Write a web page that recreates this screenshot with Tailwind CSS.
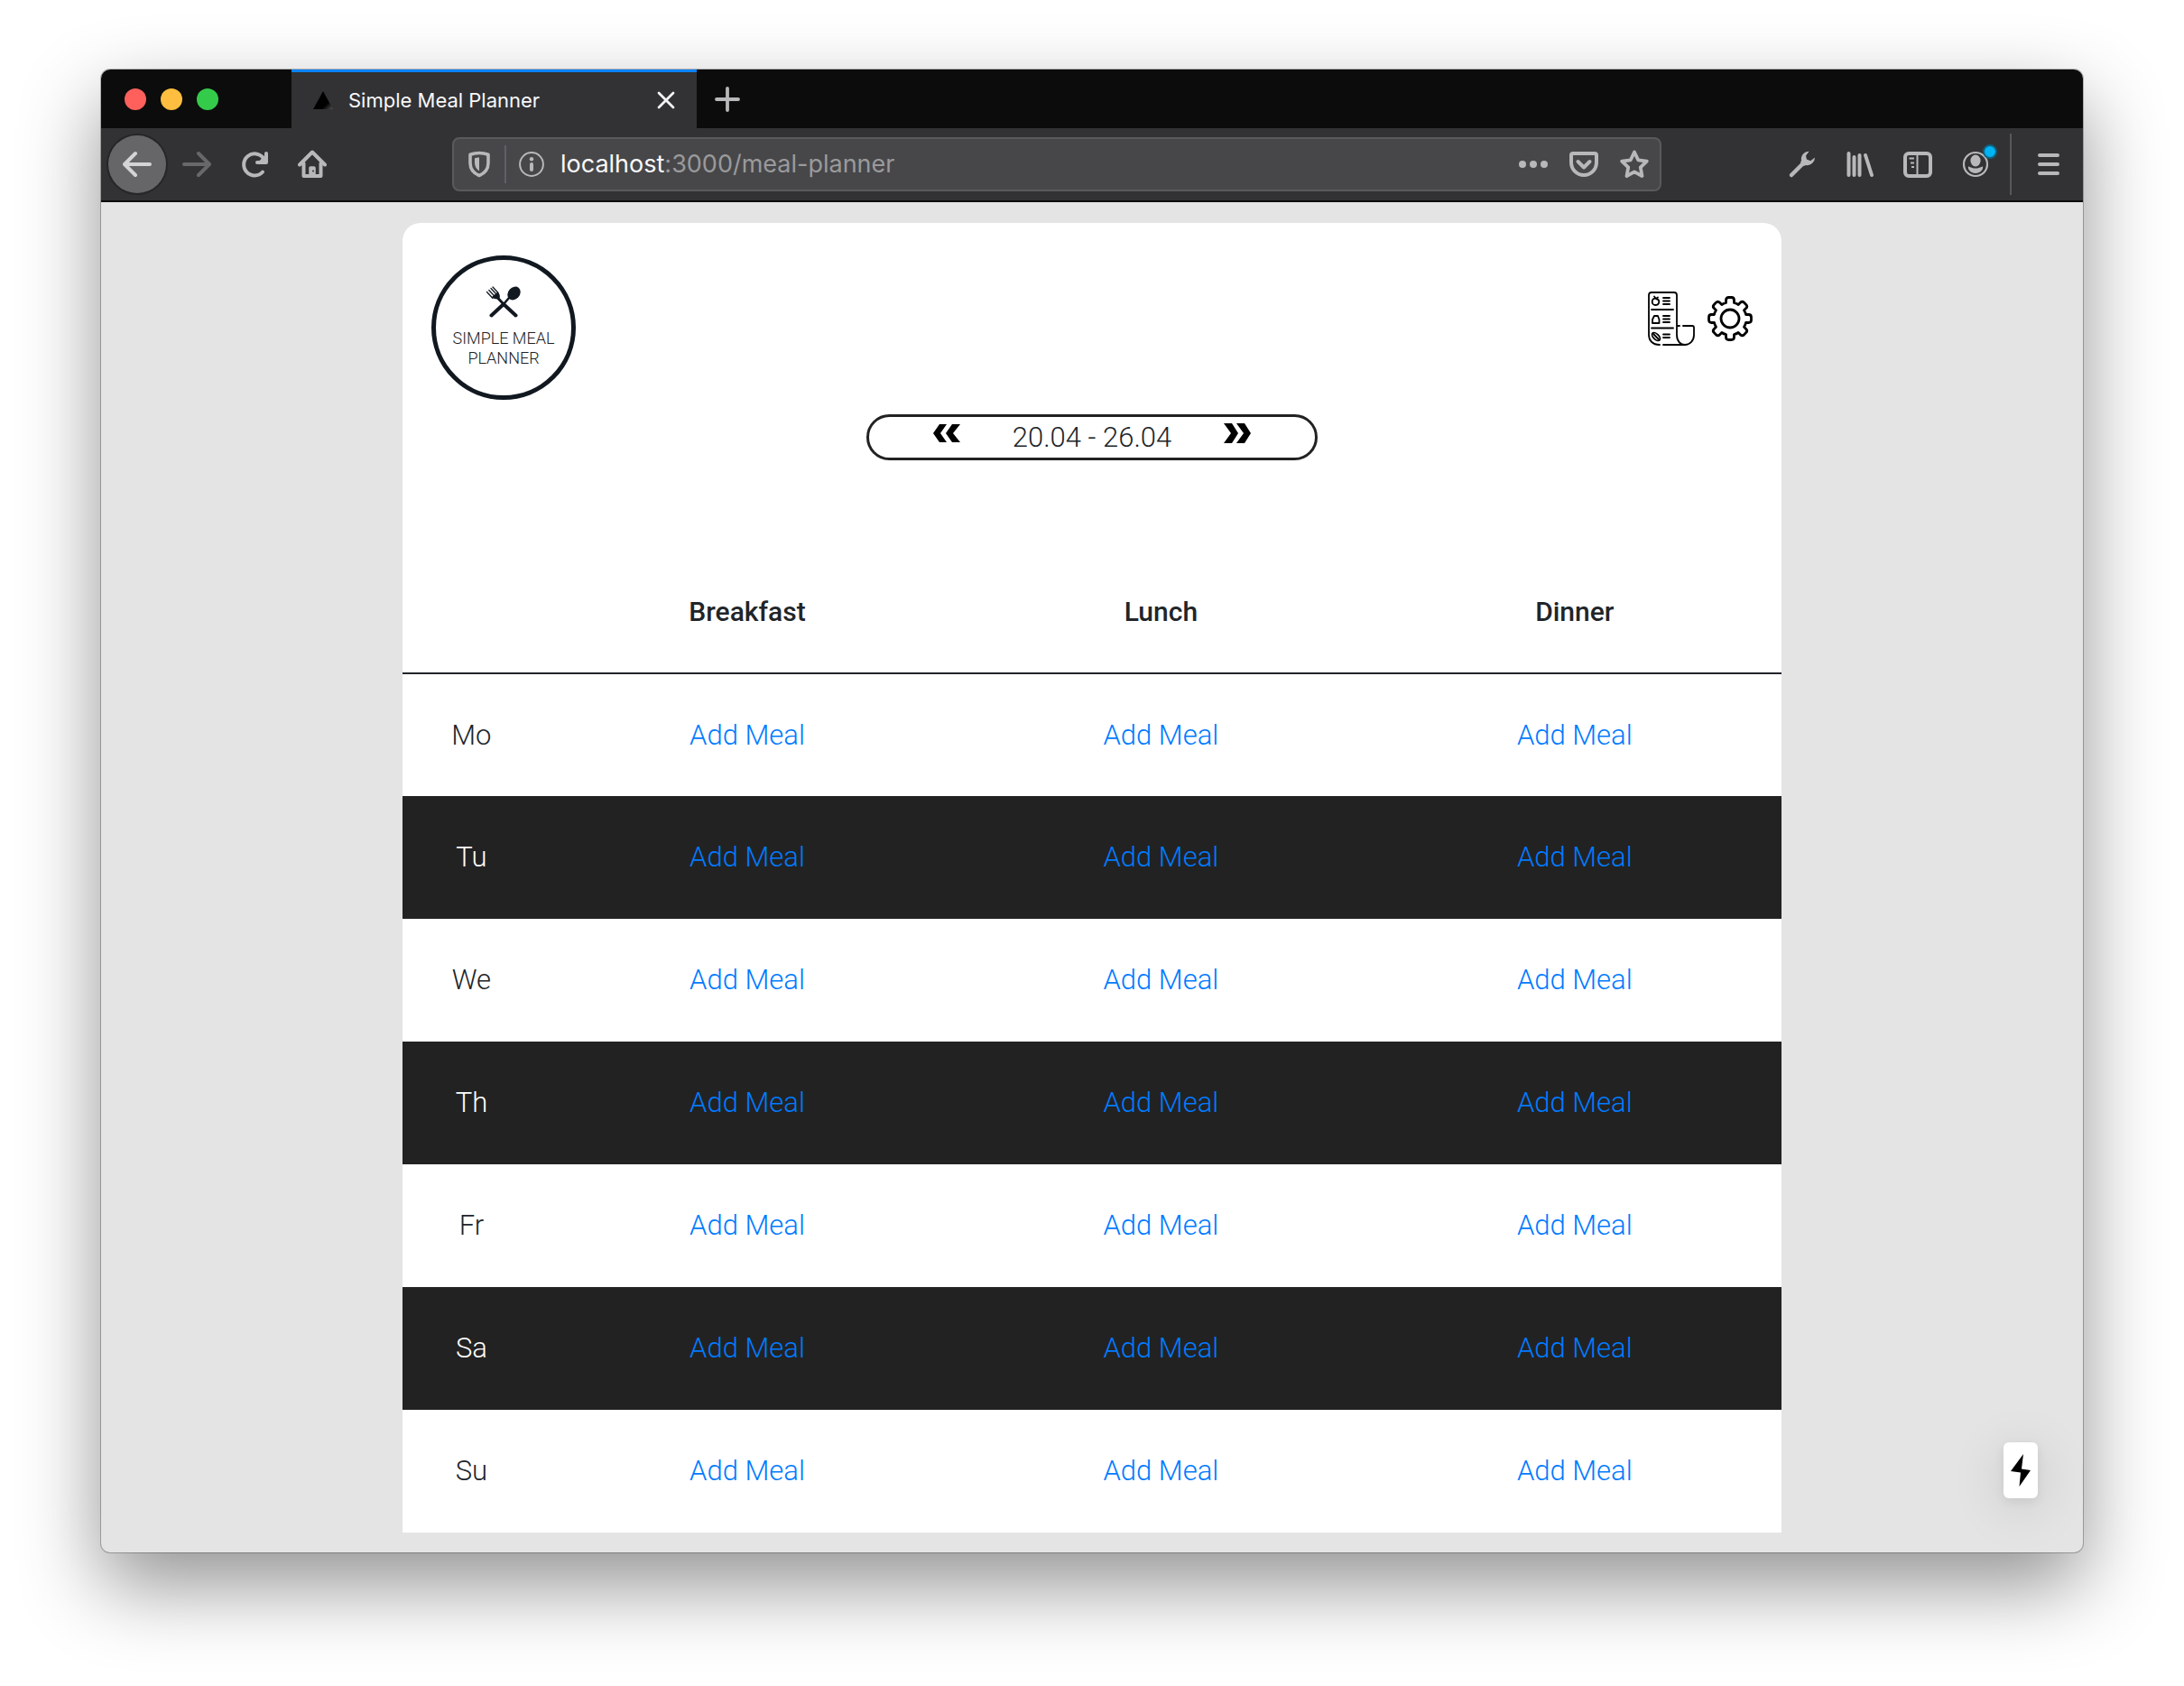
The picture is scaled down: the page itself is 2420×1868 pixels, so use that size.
<!DOCTYPE html>
<html lang="en">
<head>
<meta charset="utf-8">
<title>Simple Meal Planner</title>
<script src="https://cdn.jsdelivr.net/npm/@tailwindcss/browser@4"></script>
</head>
<body class="bg-white font-['Roboto',sans-serif] text-[#212529]">
<div class="min-h-screen px-28 pt-[77px] pb-[148px] overflow-hidden">
  <div class="relative rounded-[10px] bg-[#e4e4e4] shadow-[0_0_0_1px_rgba(0,0,0,0.25),0_36px_88px_0_rgba(0,0,0,0.43)]">

    <header class="rounded-t-[10px] overflow-hidden text-[#b8b8ba]">
      <div class="flex h-[65px] items-stretch bg-[#0c0c0c]">
        <div class="flex w-[211px] items-center gap-4 pl-[26px]">
          <button aria-label="Close window" class="size-6 rounded-full bg-[#ff605c]"></button>
          <button aria-label="Minimise window" class="size-6 rounded-full bg-[#ffbe3f]"></button>
          <button aria-label="Zoom window" class="size-6 rounded-full bg-[#34cb4b]"></button>
        </div>
        <div class="flex w-[449px] items-center border-t-3 border-[#0a84ff] bg-[#323234] pl-6 pr-[22px]">
          <svg class="h-5 w-[22px]" viewBox="0 0 22 20"><defs><linearGradient id="tri" x1="0.5" y1="0.5" x2="1" y2="1"><stop offset="0.4" stop-color="#000"/><stop offset="1" stop-color="#555"/></linearGradient></defs><path d="M11 0l11 20H0z" fill="url(#tri)"/></svg>
          <span class="ml-[17px] text-[22px] leading-7 text-[#f9f9fa] font-['Inter',sans-serif]">Simple Meal Planner</span>
          <button aria-label="Close tab" class="ml-auto text-[#f4f4f6]"><svg class="size-6" viewBox="0 0 24 24" fill="none" stroke="currentColor" stroke-width="2.8" stroke-linecap="round"><path d="M4 4l16 16M20 4L4 20"/></svg></button>
        </div>
        <button aria-label="New tab" class="ml-5"><svg class="size-7" viewBox="0 0 28 28" fill="none" stroke="currentColor" stroke-width="3.8" stroke-linecap="round"><path d="M14 2v24M2 14h24"/></svg></button>
      </div>

      <div class="flex h-[82px] items-center border-b-2 border-[#0c0c0c] bg-[#323234]">
        <button aria-label="Back" class="ml-2 grid size-16 place-items-center rounded-full bg-[#666668] text-[#d4d4d6] ring-2 ring-[#262628]"><svg class="size-8" viewBox="0 0 32 32" fill="none" stroke="currentColor" stroke-width="4" stroke-linecap="round" stroke-linejoin="round"><path d="M30 16H3M14 4L2 16l12 12"/></svg></button>
        <button aria-label="Forward" class="ml-[18px] text-[#68686a]"><svg class="size-8" viewBox="0 0 32 32" fill="none" stroke="currentColor" stroke-width="4" stroke-linecap="round" stroke-linejoin="round"><path d="M2 16h27M18 4l12 12-12 12"/></svg></button>
        <button aria-label="Reload" class="ml-8"><svg class="size-8" viewBox="0 0 32 32" fill="none" stroke="currentColor" stroke-width="4" stroke-linecap="round" stroke-linejoin="round"><path d="M25 24.500A12 12 0 1 1 26 9.500"/><path d="M29 4v10H19"/><path d="M29 6v8h-8z" fill="currentColor" stroke-width="2"/></svg></button>
        <button aria-label="Home" class="ml-8"><svg class="size-8" viewBox="0 0 32 32" fill="none" stroke="currentColor" stroke-width="4" stroke-linecap="round" stroke-linejoin="round"><path d="M2 16.500L16 2.500l14 14M6.500 15v14h19V15"/><path d="M13 29V20a1 1 0 0 1 1-1h4a1 1 0 0 1 1 1v9z" fill="currentColor" stroke-width="1.500"/><circle cx="17" cy="23.500" r="1" fill="#323234" stroke="none"/></svg></button>

        <div class="ml-[139px] flex h-[60px] min-w-0 flex-1 items-center rounded-lg border-2 border-[#5a5a5c] bg-[#474749] pl-[15px] pr-3">
          <svg class="h-[30px] w-[26px] shrink-0" viewBox="0 0 26 30"><path d="M13 2.500c4 0 7 .6 10 1.700v9.300c0 6.500-4 11.500-10 14-6-2.500-10-7.500-10-14V4.200c3-1.100 6-1.700 10-1.700z" fill="none" stroke="currentColor" stroke-width="3.600" stroke-linejoin="round"/><path d="M13 7.500v15c-3-2-5-5-5-9V8.200c1.500-.4 3-.7 5-.7z" fill="currentColor"/></svg>
          <span class="ml-[15px] h-[42px] w-0.5 shrink-0 bg-[#5d6068]"></span>
          <svg class="ml-[14px] size-7 shrink-0" viewBox="0 0 28 28"><circle cx="14" cy="14" r="12.900" fill="none" stroke="currentColor" stroke-width="2"/><circle cx="14" cy="8.200" r="2.200" fill="currentColor"/><rect x="12" y="12" width="4" height="10" rx="2" fill="currentColor"/></svg>
          <div class="ml-[18px] flex-1 truncate text-[27px] leading-9 text-[#9a9a9c] font-['Inter',sans-serif]"><span class="text-[#f9f9fa]">localhost</span>:3000/meal-planner</div>
          <button aria-label="Page actions"><svg class="size-8" viewBox="0 0 32 32" fill="currentColor"><circle cx="4" cy="16" r="4"/><circle cx="16" cy="16" r="4"/><circle cx="28" cy="16" r="4"/></svg></button>
          <button aria-label="Save to Pocket" class="ml-6"><svg class="size-8" viewBox="0 0 32 32" fill="none" stroke="currentColor" stroke-width="4" stroke-linecap="round" stroke-linejoin="round"><path d="M4 4h24a2 2 0 0 1 2 2v8a14 14 0 0 1-28 0V6a2 2 0 0 1 2-2z"/><path d="M9.500 13l6.500 6.500 6.500-6.500"/></svg></button>
          <button aria-label="Bookmark" class="ml-6"><svg class="size-8" viewBox="0 0 32 32" fill="none" stroke="currentColor" stroke-width="3.800" stroke-linejoin="round"><path d="M16 2.500l4.200 8.800 9.600 1.300-7 6.800 1.700 9.600-8.500-4.600L7.500 29l1.700-9.600-7-6.800 9.600-1.300z"/></svg></button>
        </div>

        <button aria-label="Developer tools" class="ml-[140px]"><svg class="size-8" viewBox="0 0 32 32" fill="none" stroke="currentColor" stroke-linecap="round"><path d="M4 28L18 14" stroke-width="4.500"/><path d="M30 8.500l-4.800 3.700-4.300-1.600-.9-4 3.600-4.900a8.600 8.600 0 0 0-8.600 10.300l-1 2 3.500 4 2.500-1A8.600 8.600 0 0 0 30 8.500z" fill="currentColor" stroke="none"/></svg></button>
        <button aria-label="Library" class="ml-8"><svg class="size-8" viewBox="0 0 32 32" fill="none" stroke="currentColor" stroke-width="4" stroke-linecap="round"><path d="M3.500 4v24M9.500 8v20M15.500 6v22M22 6l7 22"/></svg></button>
        <button aria-label="Sidebars" class="ml-8"><svg class="size-8" viewBox="0 0 32 32" fill="none" stroke="currentColor" stroke-width="4"><rect x="2" y="4" width="28" height="25" rx="4"/><path d="M15.500 4v25" stroke-width="2"/><path d="M6.500 9.500H12M8 14.500h4M9 19h3" stroke-width="2.200"/></svg></button>
        <button aria-label="Account" class="relative ml-8"><svg class="size-8" viewBox="0 0 32 32"><circle cx="16" cy="16" r="13" fill="none" stroke="currentColor" stroke-width="2.200"/><ellipse cx="16" cy="12" rx="5.600" ry="6.500" fill="currentColor"/><path d="M8 18.500c1.500 0 3.500 2 8 2s6.500-2 8-2c1 3-3 7.500-8 7.500s-9-4.500-8-7.500z" fill="currentColor"/></svg><span class="absolute -right-2 -top-1.5 size-4 rounded-full border-2 border-[#12617f] bg-[#00b3f4]"></span></button>
        <span class="ml-[22px] h-[68px] w-0.5 bg-[#58585a]"></span>
        <button aria-label="Menu" class="ml-[25px] mr-[22px]"><svg class="size-8" viewBox="0 0 32 32" fill="none" stroke="currentColor" stroke-width="4" stroke-linecap="round"><path d="M6 6h20M6 16h20M6 26h20"/></svg></button>
      </div>
    </header>

    <main class="mx-auto w-full max-w-[1528px] pt-[23px] pb-[22px]">
      <div class="rounded-t-[20px] bg-white">
        <div class="flex items-start justify-between px-8 pt-9">
          <a href="#" class="flex size-40 flex-col items-center rounded-full border-[5px] border-[#111820] pt-7 text-center text-lg leading-[22px] font-light text-[#222]">
            <svg class="mb-3 h-9 w-10 shrink-0" viewBox="0 0 40 36" fill="#111820" stroke="#111820" stroke-linecap="round"><ellipse cx="31.500" cy="9" rx="6.500" ry="8" transform="rotate(42 31.500 9)" stroke="none"/><path d="M26 14L20 21" stroke-width="2.500"/><path d="M20 21L6.500 33.500" stroke-width="4"/><path d="M13 13.500L20 21" stroke-width="3"/><path d="M20 21l13.500 12.500" stroke-width="4"/><path d="M1.500 7.500L8 14.500M3.800 5.500l6.500 7M6 3.500l6.500 7M8 2l6 6.500" stroke-width="1.300" fill="none"/><path d="M7 13l6.500-5.500c2 2 3 4.500 2 7-3 1.500-6 1-8.500-1.500z" stroke="none"/></svg>
            <span>SIMPLE MEAL<br>PLANNER</span>
          </a>
          <nav class="flex items-center gap-[14px] pt-10">
            <a href="#" aria-label="Shopping list"><svg class="h-[60px] w-[52px]" viewBox="0 0 52 60" fill="none" stroke="#000" stroke-width="1.800" stroke-linecap="round" stroke-linejoin="round"><path d="M13 59C5 59 1 54 1 48V4a3 3 0 0 1 3-3h25a3 3 0 0 1 3 3v44c0 7 4 11 9 11s10-4 10-11v-8a2 2 0 0 0-2-2H39M35 38h-2M17 59h24M4 20h24M4 40.500h24"/><path d="M17 7h7M17 10.500h7M17 14h7M17 27h7M17 30.500h7M17 34h7M17 47.500h7M17 51h7"/><path d="M9 8c-5-2-6 7-1 7s6-6 1-7zM9 8L7 5.500M9 8l2-1.500M5 35v-4l2-4h4l1.500 4v4z"/><ellipse cx="9" cy="50" rx="3" ry="5.500" transform="rotate(-45 9 50)"/><path d="M6 47l6 6"/></svg></a>
            <a href="#" aria-label="Settings"><svg class="size-[50px]" viewBox="0 0 50 50" fill="none" stroke="#000" stroke-width="2.800" stroke-linejoin="round"><circle cx="25" cy="25" r="10"/><path d="M20.500 7.500V4.500Q20.500 1.500 23.500 1.500h3Q29.500 1.500 29.500 4.500v3Q32 8 34.200 9.500l2.200-2.200Q38.500 5.200 40.600 7.300l2.100 2.100Q44.800 11.500 42.700 13.600L40.500 15.800Q42 18 42.500 20.500h3Q48.500 20.500 48.500 23.500v3Q48.500 29.500 45.500 29.500h-3Q42 32 40.500 34.200l2.200 2.200Q44.800 38.500 42.700 40.600l-2.100 2.100Q38.500 44.800 36.400 42.700L34.200 40.500Q32 42 29.500 42.500v3Q29.500 48.500 26.500 48.500h-3Q20.500 48.500 20.500 45.500v-3Q18 42 15.800 40.500l-2.200 2.200Q11.500 44.800 9.400 42.700l-2.100-2.100Q5.200 38.500 7.300 36.400L9.500 34.200Q8 32 7.500 29.500h-3Q1.500 29.500 1.500 26.500v-3Q1.500 20.500 4.500 20.500h3Q8 18 9.500 15.800L7.300 13.600Q5.200 11.500 7.300 9.400l2.100-2.100Q11.500 5.200 13.600 7.300L15.800 9.500Q18 8 20.500 7.500z"/></svg></a>
          </nav>
        </div>

        <div class="mx-auto mt-4 flex h-[51px] w-[500px] items-center justify-center rounded-full border-[3px] border-[#222] text-[31px] leading-10 font-light">
          <button aria-label="Previous week" class="pb-[10px]"><svg class="h-[22px] w-[30px]" viewBox="0 0 30 22"><path d="M7 1h8L8 11l7 10H7L0 11zM21 1h9L22 11l8 10h-9L14 11z"/></svg></button>
          <span class="w-[292px] text-center">20.04 - 26.04</span>
          <button aria-label="Next week" class="pb-[10px]"><svg class="h-[22px] w-[30px]" viewBox="0 0 30 22"><path d="M0 0h9l7 11-7 11H0l8-11zM14 0h9l7 11-7 11h-9l8-11z"/></svg></button>
        </div>

        <table class="mt-[100px] w-full table-fixed border-collapse text-center text-[31px] leading-10 font-light">
          <colgroup><col class="w-[10%]"><col class="w-[30%]"><col class="w-[30%]"><col class="w-[30%]"></colgroup>
          <thead><tr class="h-[136px] border-b-2 border-[#212529] text-[30px]"><th></th><th class="font-medium">Breakfast</th><th class="font-medium">Lunch</th><th class="font-medium">Dinner</th></tr></thead>
          <tbody class="[&_a]:text-[#007bff]">
            <tr class="h-[136px]"><td>Mo</td><td><a href="#">Add Meal</a></td><td><a href="#">Add Meal</a></td><td><a href="#">Add Meal</a></td></tr>
            <tr class="h-[136px] bg-[#222] text-white"><td>Tu</td><td><a href="#">Add Meal</a></td><td><a href="#">Add Meal</a></td><td><a href="#">Add Meal</a></td></tr>
            <tr class="h-[136px]"><td>We</td><td><a href="#">Add Meal</a></td><td><a href="#">Add Meal</a></td><td><a href="#">Add Meal</a></td></tr>
            <tr class="h-[136px] bg-[#222] text-white"><td>Th</td><td><a href="#">Add Meal</a></td><td><a href="#">Add Meal</a></td><td><a href="#">Add Meal</a></td></tr>
            <tr class="h-[136px]"><td>Fr</td><td><a href="#">Add Meal</a></td><td><a href="#">Add Meal</a></td><td><a href="#">Add Meal</a></td></tr>
            <tr class="h-[136px] bg-[#222] text-white"><td>Sa</td><td><a href="#">Add Meal</a></td><td><a href="#">Add Meal</a></td><td><a href="#">Add Meal</a></td></tr>
            <tr class="h-[136px]"><td>Su</td><td><a href="#">Add Meal</a></td><td><a href="#">Add Meal</a></td><td><a href="#">Add Meal</a></td></tr>
          </tbody>
        </table>
      </div>
    </main>

    <button aria-label="Prerendered page" class="absolute right-[50px] bottom-[60px] grid h-[62px] w-[38px] place-items-center rounded-md bg-white shadow-[0_10px_60px_rgba(0,0,0,0.14),0_4px_12px_rgba(0,0,0,0.08)]"><svg class="h-9 w-[22px]" viewBox="0 0 22 36"><path d="M14 0L0 19l11 1.500L9.500 36 22 18l-10-1.500z"/></svg></button>
  </div>
</div>
</body>
</html>
